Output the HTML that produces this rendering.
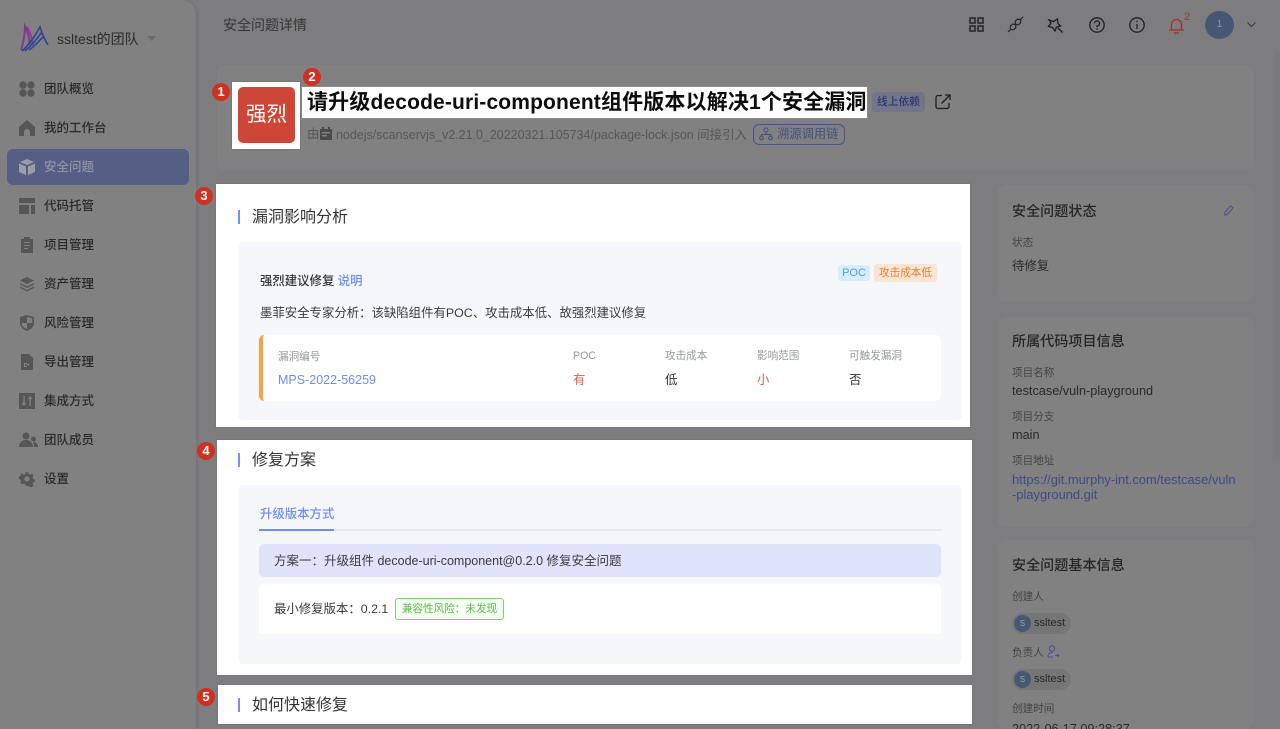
<!DOCTYPE html>
<html lang="zh"><head><meta charset="utf-8"><title>安全问题详情</title>
<style>
*{box-sizing:border-box}
html,body{margin:0;padding:0;width:1280px;height:729px;overflow:hidden}
body{font-family:"Liberation Sans","Noto Sans CJK SC",sans-serif;color:#2c2c2c;font-size:12.4px}
#root{position:absolute;left:0;top:0;width:1280px;height:729px;overflow:hidden;background:#88888a}
#ov{position:absolute;left:0;top:0;width:1280px;height:729px;background:rgba(0,0,0,.08)}
.a,.t{position:absolute}
.t{white-space:nowrap;line-height:18px}
.side{left:0;top:0;width:196px;height:729px;background:#8d8d8e;border-radius:0 14px 0 0;box-shadow:1px 0 3px rgba(0,0,0,.08)}
.nav{left:44px;font-size:12.5px;font-weight:500;color:#2e2e2e}
.ic{position:absolute;left:19px;width:16px;height:16px}
.panel{background:#8c8c8e;border-radius:8px;position:absolute}
.white{position:absolute;background:#fff;border:1px solid #77777a}
.num{position:absolute;width:18px;height:18px;border-radius:50%;background:#d03020;color:#fff;font-size:13px;font-weight:700;line-height:18px;text-align:center}
.bar{position:absolute;width:2px;height:14px;background:#7390f5}
.h{font-size:16px;color:#333}
.lab{color:#959799;font-size:10.6px}
.side-t{font-size:14.1px;color:#2a2a2a;font-weight:500}
.g{color:#4a4a4b;font-size:10.6px}
.v{color:#2e2e2e;font-size:12.7px}
.chip{position:absolute;left:1012px;width:59px;height:21px;border-radius:11px;background:#808082}
.chip i{position:absolute;left:2px;top:2px;width:17px;height:17px;border-radius:50%;background:#4d5f7d;color:#9aa;font:normal 11px/17px "Liberation Sans";text-align:center}
.chip b{position:absolute;left:22px;top:2px;font:normal 11px/17px "Liberation Sans";color:#2c2c2c}
svg{display:block;position:absolute;overflow:visible}
</style></head><body><div id="root">

<div class="a side"></div>
<svg style="left:20px;top:25px" width="28" height="27" viewBox="0 0 28 27" fill="none"><path d="M1 25C4 16 5 8 5 1c3 5 4 13 5 18" stroke="#8a3e9e" stroke-width="2"/><path d="M7 2c3 5 5 12 6 18" stroke="#a0409c" stroke-width="2"/><path d="M2 26C9 20 15 11 20 2c2 6 4 12 8 18" stroke="#3347a0" stroke-width="1.6"/><path d="M5 26C12 20 17 14 22 7" stroke="#2f4ba8" stroke-width="1.6"/><path d="M9 25c6-4 10-9 14-13" stroke="#2f4ba8" stroke-width="1.5"/></svg>
<div class="t" style="left:57px;top:30px;font-size:14px;color:#303030">ssltest的团队</div>
<svg style="left:147px;top:36px" width="10" height="6"><path d="M0 0h9L4.500 5z" fill="#777"/></svg>

<svg class="ic" style="top:81px" viewBox="0 0 16 16" fill="#5e5e5f"><circle cx="4" cy="4" r="3.700"/><circle cx="12" cy="4" r="3.700"/><circle cx="4" cy="12" r="3.700"/><circle cx="12" cy="12" r="3.700"/></svg>
<div class="t nav" style="top:80px">团队概览</div>
<svg class="ic" style="top:120px" viewBox="0 0 16 16" fill="#5e5e5f"><path d="M8 0L0 7v9h5v-4a3 3 0 0 1 6 0v4h5V7z"/></svg>
<div class="t nav" style="top:119px">我的工作台</div>

<div class="a" style="left:7px;top:149px;width:182px;height:36px;background:#5d6690;border-radius:6px"></div>
<svg class="ic" style="top:159px" viewBox="0 0 16 16" fill="#a9abb5"><path d="M8 0l7 3-7 3-7-3zM0 4.500l7 3V16l-7-3zM16 4.500l-7 3V16l7-3z"/></svg>
<div class="t nav" style="top:158px;color:#9ea1b3">安全问题</div>

<svg class="ic" style="top:198px" viewBox="0 0 16 16" fill="#5e5e5f"><path d="M0 0h16v5H0zM0 7h10v9H0zM12 7h4v9h-4z"/></svg>
<div class="t nav" style="top:197px">代码托管</div>
<svg class="ic" style="top:237px" viewBox="0 0 16 16" fill="#5e5e5f"><path d="M2 2h3V0h6v2h3v14H2zM5 6h6V5H5zm0 3h6V8H5zm0 3h4v-1H5z" fill-rule="evenodd"/></svg>
<div class="t nav" style="top:236px">项目管理</div>
<svg class="ic" style="top:276px" viewBox="0 0 16 16" fill="#5e5e5f"><path d="M8 1l7 3.500-7 3.500-7-3.500zM1 7l7 3.500L15 7v1.500L8 12 1 8.500zM1 10.500L8 14l7-3.500V12l-7 3.500L1 12z"/></svg>
<div class="t nav" style="top:275px">资产管理</div>
<svg class="ic" style="top:315px" viewBox="0 0 16 16" fill="#5e5e5f"><path d="M8 0l7 2v6c0 4-3 6.500-7 8-4-1.500-7-4-7-8V2zM8 2v6H2.800c0 3 2.200 4.800 5.200 6V8h5.200V3.300z" fill-rule="evenodd"/></svg>
<div class="t nav" style="top:314px">风险管理</div>
<svg class="ic" style="top:354px" viewBox="0 0 16 16" fill="#5e5e5f"><path d="M2 0h8l4 4v12H2zM5 9v4h3v-1H6v-2h2V9zm4 .5V10H7v1h2v1l2-1.500z" fill-rule="evenodd"/></svg>
<div class="t nav" style="top:353px">导出管理</div>
<svg class="ic" style="top:393px" viewBox="0 0 16 16"><path d="M0 0h16v16H0z" fill="#5e5e5f"/><path d="M4.300 3h1.400v7H7.500L5 13 2.500 10h1.800zM10.300 13h1.400V6h1.800L11 3 8.500 6h1.800z" fill="#8d8d8e"/></svg>
<div class="t nav" style="top:392px">集成方式</div>
<svg class="ic" style="top:432px;width:19px" viewBox="0 0 19 16" fill="#5e5e5f"><circle cx="7" cy="4" r="3.500"/><path d="M0 15c0-4 3-7 7-7s7 3 7 7z"/><circle cx="14.500" cy="7" r="2.500"/><path d="M14 10c3 0 5 2 5 5h-4c0-2-.3-3.500-1-5z"/></svg>
<div class="t nav" style="top:431px">团队成员</div>
<svg class="ic" style="top:471px" viewBox="0 0 16 16" fill="#5e5e5f"><path d="M6.500 0h3l.5 2.200 1.700.8 2-1 2 2.300-1.200 1.900.7 1.700 2 .6v3l-2 .6-.7 1.700 1 1.900-2.100 2.100-1.900-1-1.700.7L9.500 16h-3l-.6-2-1.700-.7-1.900 1-2.100-2.100 1-1.900-.7-1.700-2-.6v-3l2-.6.7-1.700-1-1.900L2.300 2l1.900 1L5.900 2.300zM8 5a3 3 0 1 0 0 6 3 3 0 0 0 0-6z" fill-rule="evenodd" transform="translate(1.100 1.100) scale(.86)"/></svg>
<div class="t nav" style="top:470px">设置</div>

<!-- Header -->
<div class="t" style="left:223px;top:16px;font-size:14px;color:#3a3a3a">安全问题详情</div>
<svg style="left:969px;top:17px" width="15" height="15" fill="none" stroke="#222" stroke-width="1.400"><rect x="1" y="1" width="5" height="5"/><rect x="9" y="1" width="5" height="5"/><rect x="1" y="9" width="5" height="5"/><rect x="9" y="9" width="5" height="5"/></svg>
<svg style="left:1008px;top:17px" width="15" height="16" fill="none" stroke="#222" stroke-width="1.200"><rect x="2.500" y="7" width="5" height="6" rx="2.500" transform="rotate(45 5 10)"/><rect x="7.500" y="2" width="5" height="6" rx="2.500" transform="rotate(45 10 5)"/><path d="M0 15l2.500-2.500M12.500 2.500L15 0"/></svg>
<svg style="left:1048px;top:18px" width="16" height="16" fill="none" stroke="#222" stroke-width="1.300"><path d="M1 2l4.500 1.500L9.500 1l.5 4.500 2.500 2.500-4 1.200L7 13 4.500 9.500.5 8.500 3 5zM10 10l4.500 4.500"/></svg>
<svg style="left:1089px;top:17px" width="16" height="16" fill="none" stroke="#222" stroke-width="1.300"><circle cx="8" cy="8" r="7.200"/><path d="M5.500 6.200A2.500 2.500 0 1 1 8 9v1.200"/><path d="M8 11.400v1.300"/></svg>
<svg style="left:1129px;top:17px" width="16" height="16" fill="none" stroke="#222" stroke-width="1.300"><circle cx="8" cy="8" r="7.200"/><path d="M8 7v5M8 3.800v1.400"/></svg>
<svg style="left:1169px;top:17px" width="16" height="17" fill="none" stroke="#a8382d" stroke-width="1.300"><path d="M0 13h15M2.500 13V7.500a5 5 0 0 1 10 0V13M5 16h5"/></svg>
<div class="t" style="left:1184px;top:11px;font-size:11px;line-height:12px;color:#a8483d">2</div>
<div class="a" style="left:1205px;top:11px;width:29px;height:28px;border-radius:50%;background:#4d5f7d;color:#9aa3b4;font-size:10px;line-height:28px;text-align:center">1</div>
<svg style="left:1247px;top:22px" width="9" height="6" fill="none" stroke="#3c3c3c" stroke-width="1"><path d="M.5.500L4.500 4.500 8.500.5"/></svg>

<!-- Top info card -->
<div class="panel" style="left:217px;top:65px;width:1037px;height:105px"></div>
<svg style="left:935px;top:94px" width="16" height="16" fill="none" stroke="#222" stroke-width="1.300"><path d="M7 1.500H3A2 2 0 0 0 1 3.500v9a2 2 0 0 0 2 2h9a2 2 0 0 0 2-2V9M6.500 9.500L15 1M10 1h5v5"/></svg>
<div class="a" style="left:872px;top:92px;width:53px;height:20px;border-radius:4px;background:#7d8095;color:#2f3c7d;font-size:10.800px;line-height:20px;text-align:center;font-weight:500">线上依赖</div>
<div class="t" style="left:307px;top:125px;font-size:12.400px;color:#5f5f61">由</div>
<svg style="left:320px;top:127px" width="12" height="13" fill="#505052"><path d="M0 2h2V0h2v2h4V0h2v2h2v11H0zM2 5v1.500h8V5zm0 3v1.500h5V8z" fill-rule="evenodd"/></svg>
<div class="t" style="left:336px;top:125.500px;font-size:12.480px;color:#5f5f61">nodejs/scanservjs_v2.21.0_20220321.105734/package-lock.json 间接引入</div>
<div class="a" style="left:753px;top:124px;width:92px;height:21px;border:1px solid #4a5d9a;border-radius:6px;color:#48598f;font-size:12.300px;line-height:19px;padding-left:23px">溯源调用链</div>
<svg style="left:759px;top:127px" width="14" height="14" fill="none" stroke="#48598f" stroke-width="1.100"><circle cx="7" cy="3" r="2"/><circle cx="2.500" cy="11" r="1.800"/><circle cx="11.500" cy="11" r="1.800"/><path d="M7 5v2.500M2.500 9V7.500h9V9"/></svg>

<!-- Right column -->
<div class="a" style="left:1275px;top:52px;width:5px;height:405px;background:#848486"></div>
<div class="panel" style="left:998px;top:185px;width:255px;height:117px"></div>
<div class="t side-t" style="left:1012px;top:202px">安全问题状态</div>
<svg style="left:1224px;top:205px" width="10" height="11" fill="none" stroke="#4c5a9a" stroke-width="1"><path d="M.8 10V7.500L6.500.8 9 2.800 3.300 9.600z"/></svg>
<div class="t g" style="left:1012px;top:234px">状态</div>
<div class="t v" style="left:1012px;top:257px;font-size:12.400px">待修复</div>

<div class="panel" style="left:998px;top:317px;width:255px;height:210px"></div>
<div class="t side-t" style="left:1012px;top:332px">所属代码项目信息</div>
<div class="t g" style="left:1012px;top:364px">项目名称</div>
<div class="t v" style="left:1012px;top:382px">testcase/vuln-playground</div>
<div class="t g" style="left:1012px;top:408px">项目分支</div>
<div class="t v" style="left:1012px;top:426px">main</div>
<div class="t g" style="left:1012px;top:452px">项目地址</div>
<div class="t v" style="left:1012px;top:472px;font-size:12.900px;color:#41538f;line-height:15px">https://git.murphy-int.com/testcase/vuln<br>-playground.git</div>

<div class="panel" style="left:998px;top:540px;width:255px;height:189px"></div>
<div class="t side-t" style="left:1012px;top:556px">安全问题基本信息</div>
<div class="t g" style="left:1012px;top:588px">创建人</div>
<div class="chip" style="top:613px"><i>s</i><b>ssltest</b></div>
<div class="t g" style="left:1012px;top:644px">负责人</div>
<svg style="left:1047px;top:645px" width="13" height="13" fill="none" stroke="#4c5a9a" stroke-width="1"><circle cx="5" cy="3.500" r="2.700"/><path d="M1 12c-.5-3 2-4.500 5-4.500M1 12h5M8 10.500h4M10.500 9l1.500 1.500-1.500 1.500"/></svg>
<div class="chip" style="top:669px"><i>s</i><b>ssltest</b></div>
<div class="t g" style="left:1012px;top:700px">创建时间</div>
<div class="t v" style="left:1012px;top:720px">2022-06-17 09:28:37</div>

<div id="ov"></div>

<!-- Highlighted logo + title -->
<div class="white" style="left:231px;top:81px;width:70px;height:69px"></div>
<div class="a" style="left:238px;top:87px;width:57px;height:56px;border-radius:5px;background:#cd4637;color:#fff;font-size:20.500px;line-height:56px;text-align:center">强烈</div>
<div class="white" style="left:301px;top:86px;width:567px;height:33px;border-color:#88888a"></div>
<div class="t" style="left:307px;top:89px;font-size:21px;line-height:27px;font-weight:700;color:#0d0d0d;letter-spacing:.15px">请升级decode-uri-component组件版本以解决1个安全漏洞</div>

<!-- Analysis card -->
<div class="white" style="left:215px;top:183px;width:756px;height:245px"></div>
<div class="bar" style="left:238px;top:210px"></div>
<div class="t h" style="left:252px;top:209px">漏洞影响分析</div>
<div class="a" style="left:238px;top:242px;width:724px;height:178px;background:#f6f7fb;border-radius:5px"></div>
<div class="t" style="left:260px;top:271.500px;font-weight:500;color:#333">强烈建议修复 <span style="color:#6d8cf5">说明</span></div>
<div class="a" style="left:838px;top:265px;width:32px;height:16px;background:#d8edfb;border-radius:3px;color:#4d9fdc;font-size:11px;line-height:16px;text-align:center">POC</div>
<div class="a" style="left:874px;top:264px;width:63px;height:18px;background:#fae5d4;border-radius:3px;color:#df7f2e;font-size:10.600px;line-height:18px;text-align:center">攻击成本低</div>
<div class="t" style="left:260px;top:304px;color:#3a3a3a">墨菲安全专家分析：该缺陷组件有POC、攻击成本低、故强烈建议修复</div>
<div class="a" style="left:259px;top:335px;width:682px;height:66px;background:#fff;border-left:4px solid #f9a04b;border-radius:5px"></div>
<div class="t lab" style="left:278px;top:348px">漏洞编号</div>
<div class="t lab" style="left:573px;top:347px">POC</div>
<div class="t lab" style="left:665px;top:347px">攻击成本</div>
<div class="t lab" style="left:757px;top:347px">影响范围</div>
<div class="t lab" style="left:849px;top:347px">可触发漏洞</div>
<div class="t" style="left:278px;top:371px;color:#6d8cf5;font-size:12.500px">MPS-2022-56259</div>
<div class="t" style="left:573px;top:371px;color:#e65b4c">有</div>
<div class="t" style="left:665px;top:371px;color:#333">低</div>
<div class="t" style="left:757px;top:371px;color:#e65b4c">小</div>
<div class="t" style="left:849px;top:371px;color:#333">否</div>

<!-- Fix card -->
<div class="white" style="left:216px;top:439px;width:757px;height:237px"></div>
<div class="bar" style="left:238px;top:453px"></div>
<div class="t h" style="left:252px;top:452px">修复方案</div>
<div class="a" style="left:238px;top:485px;width:724px;height:179px;background:#f6f7fb;border-radius:5px"></div>
<div class="t" style="left:260px;top:505px;color:#6d8cf5;font-weight:500">升级版本方式</div>
<div class="a" style="left:259px;top:529px;width:682px;height:2px;background:#e7e8ee"></div>
<div class="a" style="left:259px;top:529px;width:75px;height:2px;background:#6d8cf5"></div>
<div class="a" style="left:259px;top:544px;width:682px;height:33px;background:#dfe4fb;border-radius:5px"></div>
<div class="t" style="left:274px;top:552px;color:#3a3a3a;font-size:12.500px">方案一：升级组件 decode-uri-component@0.2.0 修复安全问题</div>
<div class="a" style="left:259px;top:584px;width:682px;height:50px;background:#fff;border-radius:4px"></div>
<div class="t" style="left:274px;top:600px;color:#3a3a3a">最小修复版本：0.2.1</div>
<div class="a" style="left:395px;top:598px;width:109px;height:22px;border:1px solid #7fcf70;border-radius:3px;background:#f7fdf5;color:#5cbb4b;font-size:10.600px;line-height:20px;text-align:center">兼容性风险：未发现</div>

<!-- How to fix -->
<div class="white" style="left:217px;top:684px;width:756px;height:41px"></div>
<div class="bar" style="left:238px;top:698px"></div>
<div class="t h" style="left:252px;top:697px">如何快速修复</div>

<!-- Numbers -->
<div class="num" style="left:212px;top:83px">1</div>
<div class="num" style="left:303px;top:68px">2</div>
<div class="num" style="left:195px;top:187px">3</div>
<div class="num" style="left:197px;top:442px">4</div>
<div class="num" style="left:197px;top:688px">5</div>

</div></body></html>
